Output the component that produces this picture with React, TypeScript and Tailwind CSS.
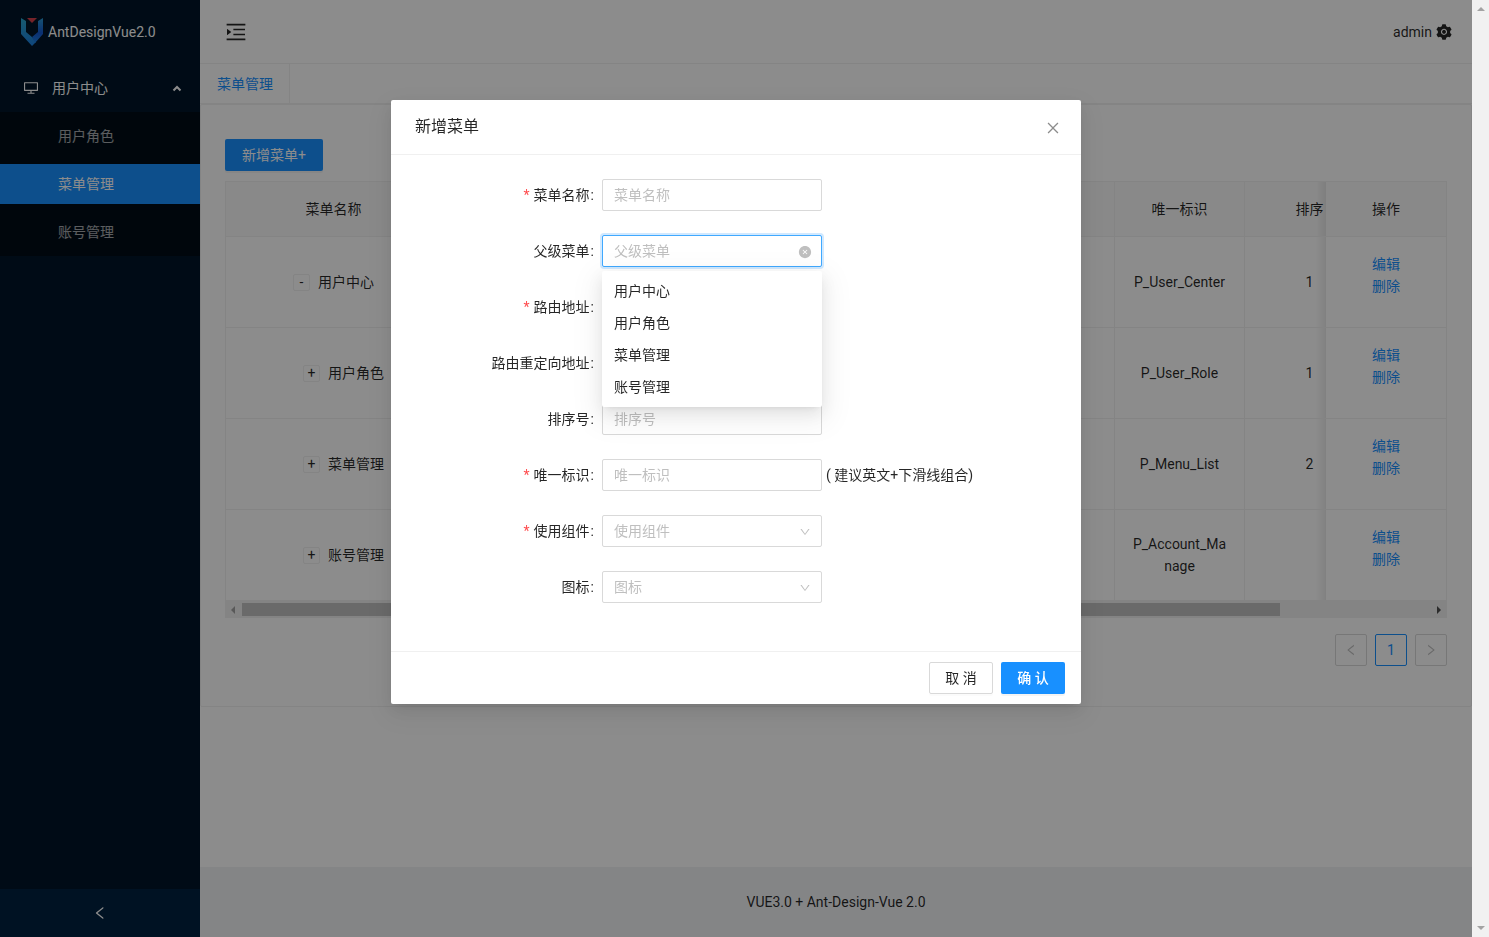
import {
  AiFillCloseCircle,
  AiFillSetting,
  AiOutlineClose,
  AiOutlineDesktop,
  AiOutlineDown,
  AiOutlineLeft,
  AiOutlineMenuUnfold,
  AiOutlineRight,
} from "react-icons/ai";

const subMenus = ["用户角色", "菜单管理", "账号管理"];
const parentOptions = ["用户中心", "用户角色", "菜单管理", "账号管理"];

const rows = [
  { name: "用户中心", key: "P_User_Center", order: "1", child: false },
  { name: "用户角色", key: "P_User_Role", order: "1", child: true },
  { name: "菜单管理", key: "P_Menu_List", order: "2", child: true },
  { name: "账号管理", key: "P_Account_Manage", order: "", child: true },
];

type Field = {
  id: string;
  label: string;
  required?: boolean;
  type: "input" | "select" | "parent";
  hint?: string;
};

const fields: Field[] = [
  { id: "name", label: "菜单名称", required: true, type: "input" },
  { id: "parent", label: "父级菜单", type: "parent" },
  { id: "path", label: "路由地址", required: true, type: "input" },
  { id: "redirect", label: "路由重定向地址", type: "input" },
  { id: "order", label: "排序号", type: "input" },
  { id: "key", label: "唯一标识", required: true, type: "input", hint: "( 建议英文+下滑线组合)" },
  { id: "component", label: "使用组件", required: true, type: "select" },
  { id: "icon", label: "图标", type: "select" },
];

function Logo() {
  return (
    <svg width="24" height="28" viewBox="0 0 24 28" aria-hidden="true">
      <defs>
        <linearGradient id="logo-left" x1="0" y1="0" x2="0" y2="1">
          <stop offset="0" stopColor="#2ba6cc" />
          <stop offset="1" stopColor="#1c7fe0" />
        </linearGradient>
        <linearGradient id="logo-right" x1="0" y1="0" x2="0" y2="1">
          <stop offset="0" stopColor="#2a98d0" />
          <stop offset="0.600" stopColor="#1458d0" />
          <stop offset="1" stopColor="#1c7fe0" />
        </linearGradient>
      </defs>
      <path d="M1 0L6 3V14L12 19L16 24L12 28L1 16Z" fill="url(#logo-left)" />
      <path d="M23 0L18 3V14L12 19L15 25L23 16Z" fill="url(#logo-right)" />
      <path d="M7 0H17L12 5Z" fill="#d8404c" />
    </svg>
  );
}

function Sidebar() {
  return (
    <aside className="flex w-[200px] shrink-0 flex-col bg-[#001529] text-white">
      <div className="flex h-16 items-center gap-1 pl-5">
        <Logo />
        <span>AntDesignVue2.0</span>
      </div>
      <nav className="flex-1">
        <button className="my-1 flex h-10 w-full items-center pr-[18px] pl-[23px] text-left">
          <AiOutlineDesktop className="mr-[13px] size-4" />
          <span className="flex-1">用户中心</span>
          <svg width="10" height="8" viewBox="0 0 10 8" fill="none" stroke="currentColor" strokeWidth="2">
            <path d="M1.500 6.500L5 3L8.500 6.500" />
          </svg>
        </button>
        <ul className="flex flex-col gap-2 bg-[#000c17] py-1">
          {subMenus.map((menu) => (
            <li key={menu}>
              <a
                href="#"
                className={
                  menu === "菜单管理"
                    ? "flex h-10 items-center bg-[#1890ff] pl-[58px]"
                    : "flex h-10 items-center pl-[58px] text-white/65"
                }
              >
                {menu}
              </a>
            </li>
          ))}
        </ul>
      </nav>
      <button aria-label="收起菜单" className="flex h-12 items-center justify-center bg-[#002140]">
        <AiOutlineLeft className="size-4" />
      </button>
    </aside>
  );
}

function MenuTable() {
  const th = "h-[55px] border-r border-b border-[#f0f0f0] bg-[#fafafa] px-4 font-normal";
  const td = "h-[91px] border-r border-b border-[#f0f0f0] bg-white px-4 text-center break-all";
  const shadow = "absolute inset-y-0 right-full w-2.5 bg-linear-to-r from-transparent to-black/8";

  return (
    <div className="border-t border-l border-[#f0f0f0]">
      <div className="overflow-hidden">
        <table className="w-full min-w-[1400px] table-fixed border-separate border-spacing-0">
          <colgroup>
            <col className="w-[216px]" />
            <col />
            <col />
            <col />
            <col className="w-[130px]" />
            <col className="w-[130px]" />
            <col className="w-[130px]" />
            <col className="w-[121px]" />
          </colgroup>
          <thead>
            <tr>
              <th className={th}>菜单名称</th>
              <th className={th}></th>
              <th className={th}></th>
              <th className={th}></th>
              <th className={th}>唯一标识</th>
              <th className={th}>排序</th>
              <th className={th}></th>
              <th className={`${th} sticky right-0`}>
                <span className={shadow} />
                操作
              </th>
            </tr>
          </thead>
          <tbody>
            {rows.map((row) => (
              <tr key={row.key}>
                <td className={td}>
                  <div className="flex items-center justify-center">
                    {row.child && <span className="w-5" />}
                    <button className="mr-2 flex size-[17px] items-center justify-center rounded-xs border border-[#f0f0f0] bg-white leading-none">
                      {row.child ? "+" : "-"}
                    </button>
                    <span>{row.name}</span>
                  </div>
                </td>
                <td className={td}></td>
                <td className={td}></td>
                <td className={td}></td>
                <td className={td}>{row.key}</td>
                <td className={td}>{row.order}</td>
                <td className={td}></td>
                <td className={`${td} sticky right-0`}>
                  <span className={shadow} />
                  <div className="flex flex-col items-center pb-[14px] text-[#1890ff]">
                    <a href="#">编辑</a>
                    <a href="#">删除</a>
                  </div>
                </td>
              </tr>
            ))}
          </tbody>
        </table>
      </div>
      {/* horizontal scrollbar */}
      <div className="flex h-[17px] items-center bg-[#f1f1f1]">
        <svg className="w-4" height="8" viewBox="0 0 16 8" fill="#a3a3a3">
          <path d="M5 4L9 0V8Z" />
        </svg>
        <div className="flex-1">
          <div className="h-[13px] w-[87.3%] bg-[#c1c1c1]" />
        </div>
        <svg className="w-4" height="8" viewBox="0 0 16 8" fill="#505050">
          <path d="M10 4L6 0V8Z" />
        </svg>
      </div>
    </div>
  );
}

function Pagination() {
  return (
    <div className="my-4 flex justify-end gap-2">
      <button aria-label="上一页" className="flex size-8 items-center justify-center rounded-xs border border-[#d9d9d9] text-black/25">
        <AiOutlineLeft className="size-[14px]" />
      </button>
      <button className="size-8 rounded-xs border border-[#1890ff] text-[#1890ff]">1</button>
      <button aria-label="下一页" className="flex size-8 items-center justify-center rounded-xs border border-[#d9d9d9] text-black/25">
        <AiOutlineRight className="size-[14px]" />
      </button>
    </div>
  );
}

function FormItem({ field }: { field: Field }) {
  const box = "h-8 w-full appearance-none rounded-xs border bg-white px-[11px] outline-none placeholder:text-[#bfbfbf]";

  return (
    <div className="flex h-8 items-center">
      <label htmlFor={field.id} className="w-[187px] shrink-0 text-right">
        {field.required && <span className="mr-1 text-[#ff4d4f]">*</span>}
        {field.label}
        <span className="mr-2 ml-px">:</span>
      </label>
      <div className="relative w-[220px] shrink-0">
        {field.type === "input" && (
          <input id={field.id} placeholder={field.label} className={`${box} border-[#d9d9d9]`} />
        )}
        {field.type === "select" && (
          <>
            <select id={field.id} className={`${box} border-[#d9d9d9] text-[#bfbfbf]`}>
              <option>{field.label}</option>
            </select>
            <AiOutlineDown className="pointer-events-none absolute top-[11px] right-[11px] size-3 text-black/25" />
          </>
        )}
        {field.type === "parent" && (
          <>
            <input
              id={field.id}
              role="combobox"
              aria-expanded="true"
              aria-controls="parent-options"
              placeholder={field.label}
              className={`${box} border-[#40a9ff] shadow-[0_0_0_2px_rgba(24,144,255,0.2)]`}
            />
            <button type="button" aria-label="清除" className="absolute top-2.5 right-2.5 text-black/25">
              <AiFillCloseCircle className="size-[14px]" />
            </button>
            <ul
              id="parent-options"
              role="listbox"
              className="absolute top-9 left-0 z-10 w-full rounded-xs bg-white py-1 shadow-[0_3px_6px_-4px_rgba(0,0,0,0.12),0_6px_16px_0_rgba(0,0,0,0.08),0_9px_28px_8px_rgba(0,0,0,0.05)]"
            >
              {parentOptions.map((option) => (
                <li key={option} role="option" aria-selected="false" className="px-3 py-[5px]">
                  {option}
                </li>
              ))}
            </ul>
          </>
        )}
      </div>
      {field.hint && <span className="ml-1 whitespace-nowrap">{field.hint}</span>}
    </div>
  );
}

function MenuModal() {
  return (
    <div
      role="dialog"
      aria-labelledby="modal-title"
      className="mx-auto mt-[100px] w-[690px] rounded-xs bg-white shadow-[0_3px_6px_-4px_rgba(0,0,0,0.12),0_6px_16px_0_rgba(0,0,0,0.08),0_9px_28px_8px_rgba(0,0,0,0.05)]"
    >
      <div className="flex h-[55px] items-center justify-between border-b border-[#f0f0f0] px-6">
        <h2 id="modal-title" className="text-base leading-6">
          新增菜单
        </h2>
        <button aria-label="关闭" className="-mr-1 pt-0.5 text-black/45">
          <AiOutlineClose className="size-4" />
        </button>
      </div>
      <form className="flex flex-col gap-6 px-6 pt-6 pb-12">
        {fields.map((field) => (
          <FormItem key={field.id} field={field} />
        ))}
      </form>
      <div className="flex justify-end gap-2 border-t border-[#f0f0f0] px-4 py-2.5">
        <button className="h-8 w-16 rounded-xs border border-[#d9d9d9] shadow-[0_2px_0_rgba(0,0,0,0.015)]">取 消</button>
        <button className="h-8 w-16 rounded-xs bg-[#1890ff] font-medium text-white shadow-[0_2px_0_rgba(0,0,0,0.045)]">
          确 认
        </button>
      </div>
    </div>
  );
}

export default function App() {
  return (
    <div className="flex min-h-screen font-[Roboto,'Noto_Sans_CJK_SC',sans-serif] text-sm leading-[22px] text-black/85">
      <div className="relative flex min-w-0 flex-1">
        <Sidebar />
        <div className="flex min-w-0 flex-1 flex-col bg-white">
          <header className="flex h-16 items-center justify-between border-b border-[#f0f0f0] pr-[19px] pl-6">
            <button aria-label="展开菜单">
              <AiOutlineMenuUnfold className="size-6" />
            </button>
            <div className="flex items-center gap-[3px]">
              <span>admin</span>
              <AiFillSetting className="size-[18px]" />
            </div>
          </header>
          <div className="flex h-10 border-b border-[#f0f0f0] pl-px">
            <a href="#" className="flex items-center border-r border-[#f0f0f0] px-4 text-[#1890ff]">
              菜单管理
            </a>
          </div>
          <main className="flex-1">
            <div className="rounded-xs border border-[#f0f0f0] px-6 pt-[34px] pb-6">
              <button className="mb-2.5 block h-8 w-[98px] rounded-xs bg-[#1890ff] text-white shadow-[0_2px_0_rgba(0,0,0,0.045)]">
                新增菜单+
              </button>
              <MenuTable />
              <Pagination />
            </div>
          </main>
          <footer className="bg-[#f0f2f5] py-6 text-center">VUE3.0 + Ant-Design-Vue 2.0</footer>
        </div>
        <div className="absolute inset-0 z-10 bg-black/45">
          <MenuModal />
        </div>
      </div>
      {/* page scrollbar */}
      <div className="flex w-[17px] shrink-0 flex-col items-center justify-between bg-[#f1f1f1] py-[7px]">
        <svg width="8" height="4" viewBox="0 0 8 4" fill="#a3a3a3">
          <path d="M4 0L8 4H0Z" />
        </svg>
        <svg width="8" height="4" viewBox="0 0 8 4" fill="#a3a3a3">
          <path d="M4 4L8 0H0Z" />
        </svg>
      </div>
    </div>
  );
}
